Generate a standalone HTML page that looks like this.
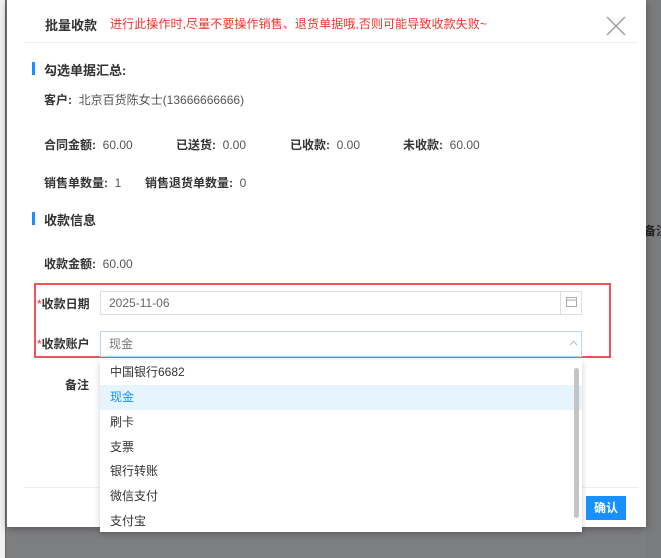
<!DOCTYPE html>
<html><head><meta charset="utf-8"><style>
*{margin:0;padding:0;box-sizing:border-box}
body{width:661px;height:558px;overflow:hidden;background:#7d7e80;font-family:"Liberation Sans","Noto Sans CJK SC",sans-serif;font-size:12px;color:#333;position:relative}
.abs{position:absolute;white-space:nowrap}
.lbl{font-weight:bold;color:#333}
.val{color:#555}
</style></head><body>
<div class="abs" style="left:0;top:0;width:5px;height:558px;background:#f2f2f2"></div>
<div class="abs" style="left:5px;top:0;width:1px;height:558px;background:#666"></div>
<div class="abs" style="left:646px;top:0;width:15px;height:558px;background:#7a7b7d;overflow:hidden">
<div class="abs" style="left:-2px;top:222px;font-size:12px;font-weight:bold;color:#222">备注</div>
</div>
<div class="abs" style="left:7px;top:0;width:639px;height:527px;background:#fff;box-shadow:0 2px 8px rgba(0,0,0,.3)"></div>
<div class="abs" style="left:45px;top:15px;font-size:13px;font-weight:bold;color:#333">批量收款</div>
<div class="abs" style="left:110px;top:15px;font-size:12px;color:#f0332b;letter-spacing:0.1px">进行此操作时,尽量不要操作销售、退货单据哦,否则可能导致收款失败~</div>
<svg class="abs" style="left:606px;top:16px" width="20" height="20"><path d="M1 1L19 19M19 1L1 19" stroke="#999" stroke-width="1.3"/></svg>
<div class="abs" style="left:24px;top:42px;width:614px;height:1px;background:#eee"></div>
<div class="abs" style="left:32px;top:62px;width:3px;height:13px;background:#1890ff"></div>
<div class="abs" style="left:44px;top:60px;font-size:13px;font-weight:bold">勾选单据汇总:</div>
<div class="abs" style="left:44px;top:91px"><span class="lbl">客户:</span>&nbsp; <span class="val">北京百货陈女士(13666666666)</span></div>
<div class="abs" style="left:44px;top:136px"><span class="lbl">合同金额:</span>&nbsp; <span class="val">60.00</span></div>
<div class="abs" style="left:176px;top:136px"><span class="lbl">已送货:</span>&nbsp; <span class="val">0.00</span></div>
<div class="abs" style="left:290px;top:136px"><span class="lbl">已收款:</span>&nbsp; <span class="val">0.00</span></div>
<div class="abs" style="left:403px;top:136px"><span class="lbl">未收款:</span>&nbsp; <span class="val">60.00</span></div>
<div class="abs" style="left:44px;top:174px"><span class="lbl">销售单数量:</span>&nbsp; <span class="val">1</span></div>
<div class="abs" style="left:145px;top:174px"><span class="lbl">销售退货单数量:</span>&nbsp; <span class="val">0</span></div>
<div class="abs" style="left:32px;top:212px;width:3px;height:13px;background:#1890ff"></div>
<div class="abs" style="left:44px;top:210px;font-size:13px;font-weight:bold">收款信息</div>
<div class="abs" style="left:44px;top:255px"><span class="lbl">收款金额:</span>&nbsp; <span class="val">60.00</span></div>
<div class="abs" style="left:34px;top:283px;width:577px;height:75px;border:2px solid #f0545a"></div>
<div class="abs" style="left:37px;top:295px"><span style="color:#f5222d">*</span><span class="lbl">收款日期</span></div>
<div class="abs" style="left:100px;top:291px;width:482px;height:24px;border:1px solid #ddd;background:#fff"></div>
<div class="abs" style="left:560px;top:292px;width:1px;height:22px;background:#ddd"></div>
<svg class="abs" style="left:566px;top:296px" width="11" height="11"><rect x="0.5" y="1.5" width="10" height="9" fill="none" stroke="#aaa"/><line x1="0" y1="4" x2="11" y2="4" stroke="#aaa"/></svg>
<div class="abs" style="left:109px;top:296px;color:#666;font-size:12px">2025-11-06</div>
<div class="abs" style="left:37px;top:335px"><span style="color:#f5222d">*</span><span class="lbl">收款账户</span></div>
<div class="abs" style="left:100px;top:331px;width:482px;height:26px;border:1px solid #b8d6f0;background:#fff"></div>
<div class="abs" style="left:109px;top:335px;color:#777">现金</div>
<svg class="abs" style="left:569px;top:340px" width="9" height="6"><path d="M1 5L4.5 1L8 5" fill="none" stroke="#bbb"/></svg>
<div class="abs" style="left:65px;top:376px"><span class="lbl">备注</span></div>
<div class="abs" style="left:24px;top:487px;width:614px;height:1px;background:#eee"></div>
<div class="abs" style="left:586px;top:496px;width:40px;height:24px;background:#1890ff;color:#fff;font-weight:bold;text-align:center;line-height:24px">确认</div>
<div class="abs" style="left:100px;top:360px;width:482px;height:172px;background:#fff;box-shadow:0 2px 6px rgba(0,0,0,.2);overflow:hidden">
<div style="height:25px;line-height:25px;padding-left:10px;color:#333">中国银行6682</div>
<div style="height:25px;line-height:25px;padding-left:10px;color:#1890ff;background:#e6f4fd">现金</div>
<div style="height:25px;line-height:25px;padding-left:10px">刷卡</div>
<div style="height:24px;line-height:24px;padding-left:10px">支票</div>
<div style="height:25px;line-height:25px;padding-left:10px">银行转账</div>
<div style="height:25px;line-height:25px;padding-left:10px">微信支付</div>
<div style="height:25px;line-height:25px;padding-left:10px">支付宝</div>
<div class="abs" style="left:474px;top:8px;width:5px;height:150px;background:#c4c4c4;border-radius:3px"></div>
</div>
</body></html>
